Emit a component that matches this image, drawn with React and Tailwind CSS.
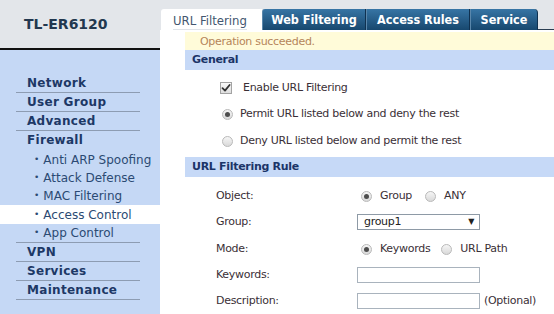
const TABFONT = "font-['DejaVu_Sans_Condensed','DejaVu_Sans',sans-serif]";
const FONT = "font-['DejaVu_Sans','Verdana',sans-serif] tracking-[-0.3px]";

function Radio({ on }) {
  return (
    <span className="w-[11px] h-[11px] rounded-full border border-[#b9b9b9] bg-gradient-to-b from-[#f6f6f6] to-[#d9d9d9] flex items-center justify-center shrink-0">
      {on ? <span className="w-[5px] h-[5px] rounded-full bg-[#4d4d4d]" /> : null}
    </span>
  );
}

function Check() {
  return (
    <span className="w-[12px] h-[12px] border border-[#a3a3a3] bg-gradient-to-b from-[#fafafa] to-[#dedede] flex items-center justify-center shrink-0">
      <svg width="10" height="10" viewBox="0 0 10 10" fill="none">
        <path d="M1.5 5.2 4 7.6 8.6 2" stroke="#333" strokeWidth="1.8" strokeLinecap="round" strokeLinejoin="round" />
      </svg>
    </span>
  );
}

const mainItems = ["Network", "User Group", "Advanced"];
const subItems = ["Anti ARP Spoofing", "Attack Defense", "MAC Filtering", "Access Control", "App Control"];
const tailItems = ["VPN", "Services", "Maintenance"];

function Sidebar() {
  const main = (t) => (
    <div
      key={t}
      className="ml-4 w-[124px] h-[19px] border-b border-[#8d9cb2] pl-[11px] flex items-center text-[12px] font-bold text-[#1d3866] tracking-[0.3px]"
    >
      {t}
    </div>
  );
  return (
    <div className="w-[160px] flex flex-col font-['DejaVu_Sans',sans-serif]">
      <div className="h-[48px] flex items-center pl-6 text-[14px] font-bold text-[#22384f]">TL-ER6120</div>
      <div className="h-[2px] bg-[#111]" />
      <div className="flex-1 bg-[#c5d8f5] pt-[24px]">
        {mainItems.map(main)}
        <div className="ml-4 h-[20px] pb-[2px] pl-[11px] flex items-center text-[12px] font-bold text-[#1d3866] tracking-[0.3px]">
          Firewall
        </div>
        {subItems.map((t, i) => {
          const active = t === "Access Control";
          const last = i === subItems.length - 1;
          return (
            <div
              key={t}
              className={[
                "flex items-center text-[12px] text-[#2b4a73]",
                last ? "ml-4 w-[124px] h-[19px] border-b border-[#8d9cb2] pl-[18px]" : "pl-[34px]",
                active ? "h-[19px] bg-white" : last ? "" : "h-[18px]",
              ].join(" ")}
            >
              <span className="mr-[4px] text-[9px]">•</span>
              {t}
            </div>
          );
        })}
        {tailItems.map(main)}
      </div>
    </div>
  );
}

function Tabs() {
  const dark = ["Web Filtering", "Access Rules", "Service"];
  const widths = ["w-[104px]", "w-[104px]", "w-[68px]"];
  return (
    <div className={`h-[30px] flex items-end pl-[1px] ${TABFONT}`}>
      <div className="w-[101px] h-[21px] bg-white rounded-tl-[3px] flex items-center pl-[12px] pt-[2px] text-[13px] text-[#43566f]">
        <span className="border-b border-[#dfe3e8] leading-[17px]">URL Filtering</span>
      </div>
      {dark.map((t, i) => (
        <div
          key={t}
          className={[
            widths[i],
            "h-[21px] flex items-center justify-center pt-[1px] text-[12.5px] font-bold text-white bg-gradient-to-b from-[#3775a5] to-[#17486f] border-l border-[#5a87ab] border-r border-r-[#0f3150]",
            i === 0 ? "rounded-tl-[3px]" : "",
            i === 2 ? "rounded-tr-[4px]" : "",
          ].join(" ")}
        >
          {t}
        </div>
      ))}
      <div className="flex-1 h-[21px] border-b border-[#2a3e52]" />
    </div>
  );
}

function Bar({ children }) {
  return (
    <div className="h-[20px] bg-[#c6d9f7] pl-[7px] pt-[1px] flex items-center text-[11px] font-bold text-[#1b3468]">{children}</div>
  );
}

function Row({ label, children }) {
  return (
    <div className="h-[26px] flex items-center">
      <div className="w-[172px] pl-[31px] text-[11px] text-[#3a2f36]">{label}</div>
      <div className="flex items-center">{children}</div>
    </div>
  );
}

function Content() {
  return (
    <div className={`flex-1 bg-white pl-[25px] pt-[2px] ${FONT} text-[#3a2f36]`}>
      <div className="h-[18px] bg-[#fffbd9] pl-[15px] pt-[3px] flex items-center text-[11px] text-[#b5855a]">Operation succeeded.</div>
      <Bar>General</Bar>
      <div className="pt-[5px] text-[11px]">
        <div className="h-[26px] flex items-center pl-[35px]">
          <Check />
          <span className="ml-[11px]">Enable URL Filtering</span>
        </div>
        <div className="h-[27px] flex items-center pl-[37px]">
          <Radio on />
          <span className="ml-[7px]">Permit URL listed below and deny the rest</span>
        </div>
        <div className="h-[26px] flex items-center pl-[37px]">
          <Radio />
          <span className="ml-[7px]">Deny URL listed below and permit the rest</span>
        </div>
      </div>
      <div className="mt-[3px]">
        <Bar>URL Filtering Rule</Bar>
      </div>
      <div className="pt-[6px] text-[11px]">
        <Row label="Object:">
          <span className="ml-[4px]"><Radio on /></span>
          <span className="ml-[8px]">Group</span>
          <span className="ml-[13px]"><Radio /></span>
          <span className="ml-[8px]">ANY</span>
        </Row>
        <Row label="Group:">
          <div className="w-[123px] h-[16px] border border-[#8e9aa6] flex items-center justify-between pl-[6px] pr-[5px] text-[#222]">
            <span>group1</span>
            <span className="text-[8px]">▼</span>
          </div>
        </Row>
        <div className="h-[1px]" />
        <Row label="Mode:">
          <span className="ml-[4px]"><Radio on /></span>
          <span className="ml-[8px]">Keywords</span>
          <span className="ml-[11px]"><Radio /></span>
          <span className="ml-[8px]">URL Path</span>
        </Row>
        <Row label="Keywords:">
          <div className="w-[123px] h-[16px] border border-[#a9b3bd]" />
        </Row>
        <Row label="Description:">
          <div className="w-[123px] h-[16px] border border-[#a9b3bd]" />
          <span className="ml-[4px]">(Optional)</span>
        </Row>
      </div>
    </div>
  );
}

export default function App() {
  return (
    <div className="w-[554px] h-[314px] flex bg-[#e3e6ea] overflow-hidden">
      <Sidebar />
      <div className="flex-1 flex flex-col">
        <Tabs />
        <Content />
      </div>
    </div>
  );
}
